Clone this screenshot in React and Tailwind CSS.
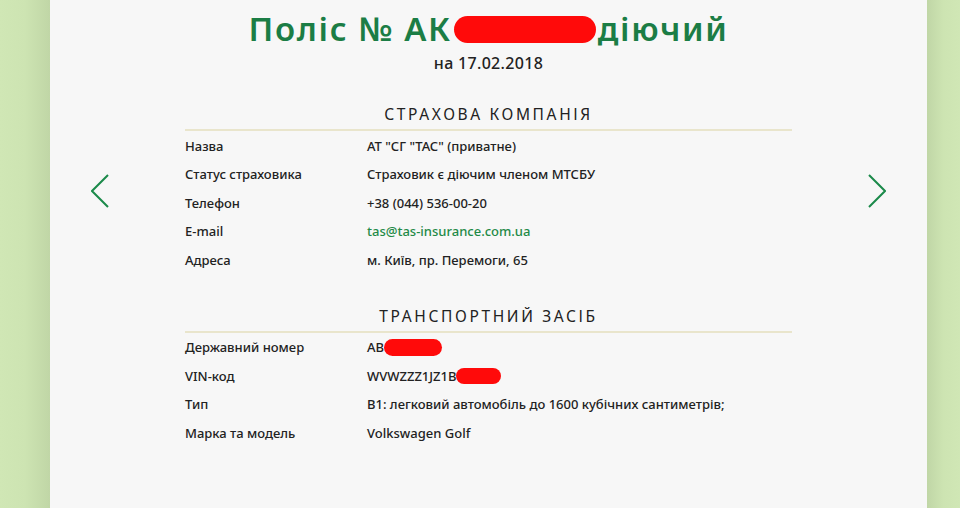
import React from 'react'

const COMPANY = [
  ['Назва', 'АТ "СГ "ТАС" (приватне)'],
  ['Статус страховика', 'Страховик є діючим членом МТСБУ'],
  ['Телефон', '+38 (044) 536-00-20'],
  ['E-mail', 'tas@tas-insurance.com.ua', true],
  ['Адреса', 'м. Київ, пр. Перемоги, 65'],
]

function Blot({ className }) {
  return <span className={`inline-block rounded-full bg-[#ff0a0a] align-middle ${className}`} />
}

function Chevron({ dir }) {
  return (
    <svg width="18" height="34" viewBox="0 0 18 34" fill="none">
      <path
        d={dir === 'left' ? 'M17 1 L1 17 L17 33' : 'M1 1 L17 17 L1 33'}
        stroke="#1b8a4a"
        strokeWidth="2"
      />
    </svg>
  )
}

function Section({ title, children }) {
  return (
    <div>
      <h2 className="text-center text-[15.5px] font-normal tracking-[0.17em] text-[#222] leading-[20px]">{title}</h2>
      <div className="mt-[5px] h-[2px] bg-[#e9e5cc]" />
      <div className="mt-[1px]">{children}</div>
    </div>
  )
}

function Row({ label, children }) {
  return (
    <div className="grid grid-cols-[182px_1fr] h-[28.5px] items-center text-[13px] font-medium text-[#222]">
      <div>{label}</div>
      <div>{children}</div>
    </div>
  )
}

export default function App() {
  return (
    <div className="flex h-[508px] w-[960px] overflow-hidden" style={{ fontFamily: '"Noto Sans", sans-serif' }}>
      <div className="w-[50px] bg-gradient-to-r from-[#d0e7b5] via-[#cde4b2] to-[#c0d6a6]" />
      <div className="relative flex-1 bg-[#f7f7f7]">
        <div className="absolute left-[41px] top-[174px]">
          <Chevron dir="left" />
        </div>
        <div className="absolute right-[41px] top-[174px]">
          <Chevron dir="right" />
        </div>

        <div className="mx-auto w-[607px] pt-[5px]">
          <h1 className="flex items-center justify-center text-[33px] font-semibold leading-[48px] tracking-[0.05em] text-[#1b7d45]">
            <span>Поліс № АК</span>
            <Blot className="mx-[2px] h-[27px] w-[142px]" />
            <span>діючий</span>
          </h1>
          <p className="-mt-[1px] text-center text-[16px] font-medium leading-[22px] tracking-[0.02em] text-[#222]">на 17.02.2018</p>

          <div className="mt-[30px]">
            <Section title="СТРАХОВА КОМПАНІЯ">
              {COMPANY.map(([label, value, link]) => (
                <Row key={label} label={label}>
                  {link ? <span className="text-[#1f8a47]">{value}</span> : value}
                </Row>
              ))}
            </Section>
          </div>

          <div className="mt-[31px]">
            <Section title="ТРАНСПОРТНИЙ ЗАСІБ">
              <Row label="Державний номер">
                <span className="inline-flex items-center">
                  AB
                  <Blot className="h-[17px] w-[58px]" />
                </span>
              </Row>
              <Row label="VIN-код">
                <span className="inline-flex items-center">
                  WVWZZZ1JZ1B
                  <Blot className="h-[16px] w-[45px]" />
                </span>
              </Row>
              <Row label="Тип">B1: легковий автомобіль до 1600 кубічних сантиметрів;</Row>
              <Row label="Марка та модель">Volkswagen Golf</Row>
            </Section>
          </div>
        </div>
      </div>
      <div className="w-[33px] bg-gradient-to-r from-[#c0d6a6] via-[#cde4b2] to-[#d0e7b5]" />
    </div>
  )
}
